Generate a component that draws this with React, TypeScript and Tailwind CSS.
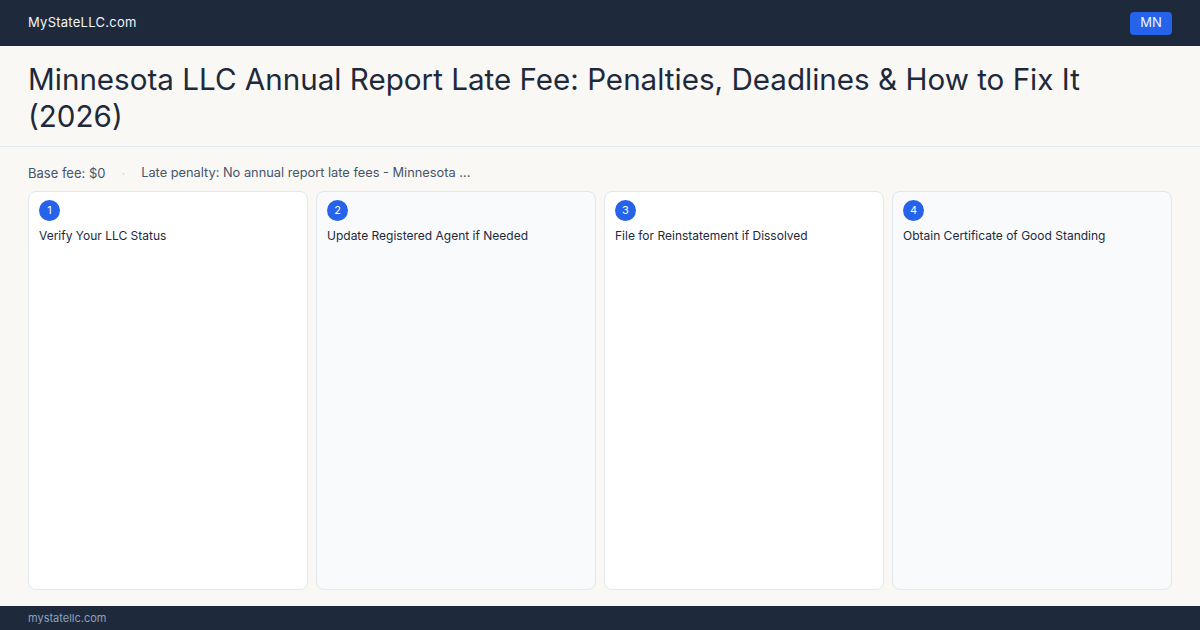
const steps = [
  "Verify Your LLC Status",
  "Update Registered Agent if Needed",
  "File for Reinstatement if Dissolved",
  "Obtain Certificate of Good Standing",
];

export default function App() {
  return (
    <div
      className="flex h-[630px] w-[1200px] flex-col bg-[#f9f8f5] text-slate-800"
      style={{ fontFamily: "Inter, 'Noto Sans', sans-serif" }}
    >
      <header className="flex h-[46px] shrink-0 items-center justify-between bg-[#1e293b] px-7">
        <div className="text-[13px] tracking-[0.02em] text-slate-100">MyStateLLC.com</div>
        <div className="flex h-[23px] w-[42px] items-center justify-center rounded-[4px] bg-[#2563eb] text-[13px] text-blue-50">
          MN
        </div>
      </header>

      <div className="shrink-0 border-b border-[#e2e8f0] px-7 pb-[11px] pt-[15px]">
        <h1 className="text-[29.6px] font-normal leading-[37px] text-[#1e293b]">
          Minnesota LLC Annual Report Late Fee: Penalties, Deadlines &amp; How to Fix It (2026)
        </h1>
      </div>

      <main className="flex min-h-0 flex-1 flex-col px-7 pb-[16px] pt-[18px]">
        <div className="flex items-center text-[13px] leading-4 text-slate-600">
          <span>Base fee: $0</span>
          <span className="mx-[16px] text-slate-300">·</span>
          <span className="text-[12.8px]">Late penalty: No annual report late fees - Minnesota ...</span>
        </div>

        <div className="mt-[10px] grid min-h-0 flex-1 grid-cols-4 gap-2">
          {steps.map((step, index) => (
            <div
              key={step}
              className={`rounded-lg border border-[#e2e8f0] px-[10px] pt-[8px] ${
                index % 2 === 1 ? "bg-[#f8fafc]" : "bg-white"
              }`}
            >
              <div className="flex h-[21px] w-[21px] items-center justify-center rounded-full bg-[#2563eb] text-[11px] text-white">
                {index + 1}
              </div>
              <div className="mt-[7px] text-[12px] leading-4 text-slate-800">{step}</div>
            </div>
          ))}
        </div>
      </main>

      <footer className="flex h-[24px] shrink-0 items-center bg-[#1e293b] px-7 text-[11px] text-slate-400">
        mystatellc.com
      </footer>
    </div>
  );
}
